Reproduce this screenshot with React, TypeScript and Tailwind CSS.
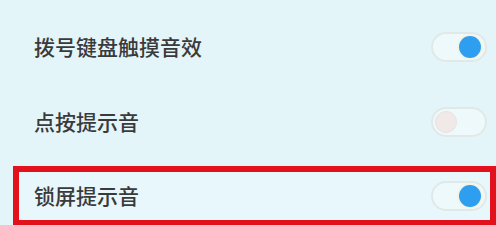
import React from 'react';

function Toggle({ on }: { on: boolean }) {
  return (
    <div className="relative w-[56px] h-[30px] rounded-full border-2 border-[#e1e8e8] bg-[#eef9fb] shrink-0">
      {on ? (
        <div className="absolute right-[4px] top-[2px] w-[22px] h-[22px] rounded-full bg-[#2e9ff0] shadow-[0_0_0_2px_#f3f4e6]" />
      ) : (
        <div className="absolute left-[2px] top-[2px] w-[22px] h-[22px] rounded-full bg-[#f1e8e8] border border-[#e8e2e2]" />
      )}
    </div>
  );
}

export default function App() {
  const font = { fontFamily: '"Noto Sans CJK SC", "Noto Sans", sans-serif' };
  return (
    <div className="w-[496px] h-[225px] overflow-hidden bg-[#e4f5fa] pt-[9px]" style={font}>
      <div className="h-[75px] flex items-center justify-between pl-[34px] pr-[9px]">
        <span className="text-[21px] font-medium text-[#3a3a3a]">拨号键盘触摸音效</span>
        <Toggle on />
      </div>
      <div className="h-[75px] flex items-center justify-between pl-[34px] pr-[9px]">
        <span className="text-[21px] font-medium text-[#3a3a3a]">点按提示音</span>
        <Toggle on={false} />
      </div>
      <div className="mt-[7px] ml-[13px] h-[60px] border-[6px] border-[#e2111c] flex items-center justify-between pl-[15px] pr-[3px] bg-[#e8f7fb]">
        <span className="text-[21px] font-medium text-[#3a3a3a]">锁屏提示音</span>
        <Toggle on />
      </div>
    </div>
  );
}
